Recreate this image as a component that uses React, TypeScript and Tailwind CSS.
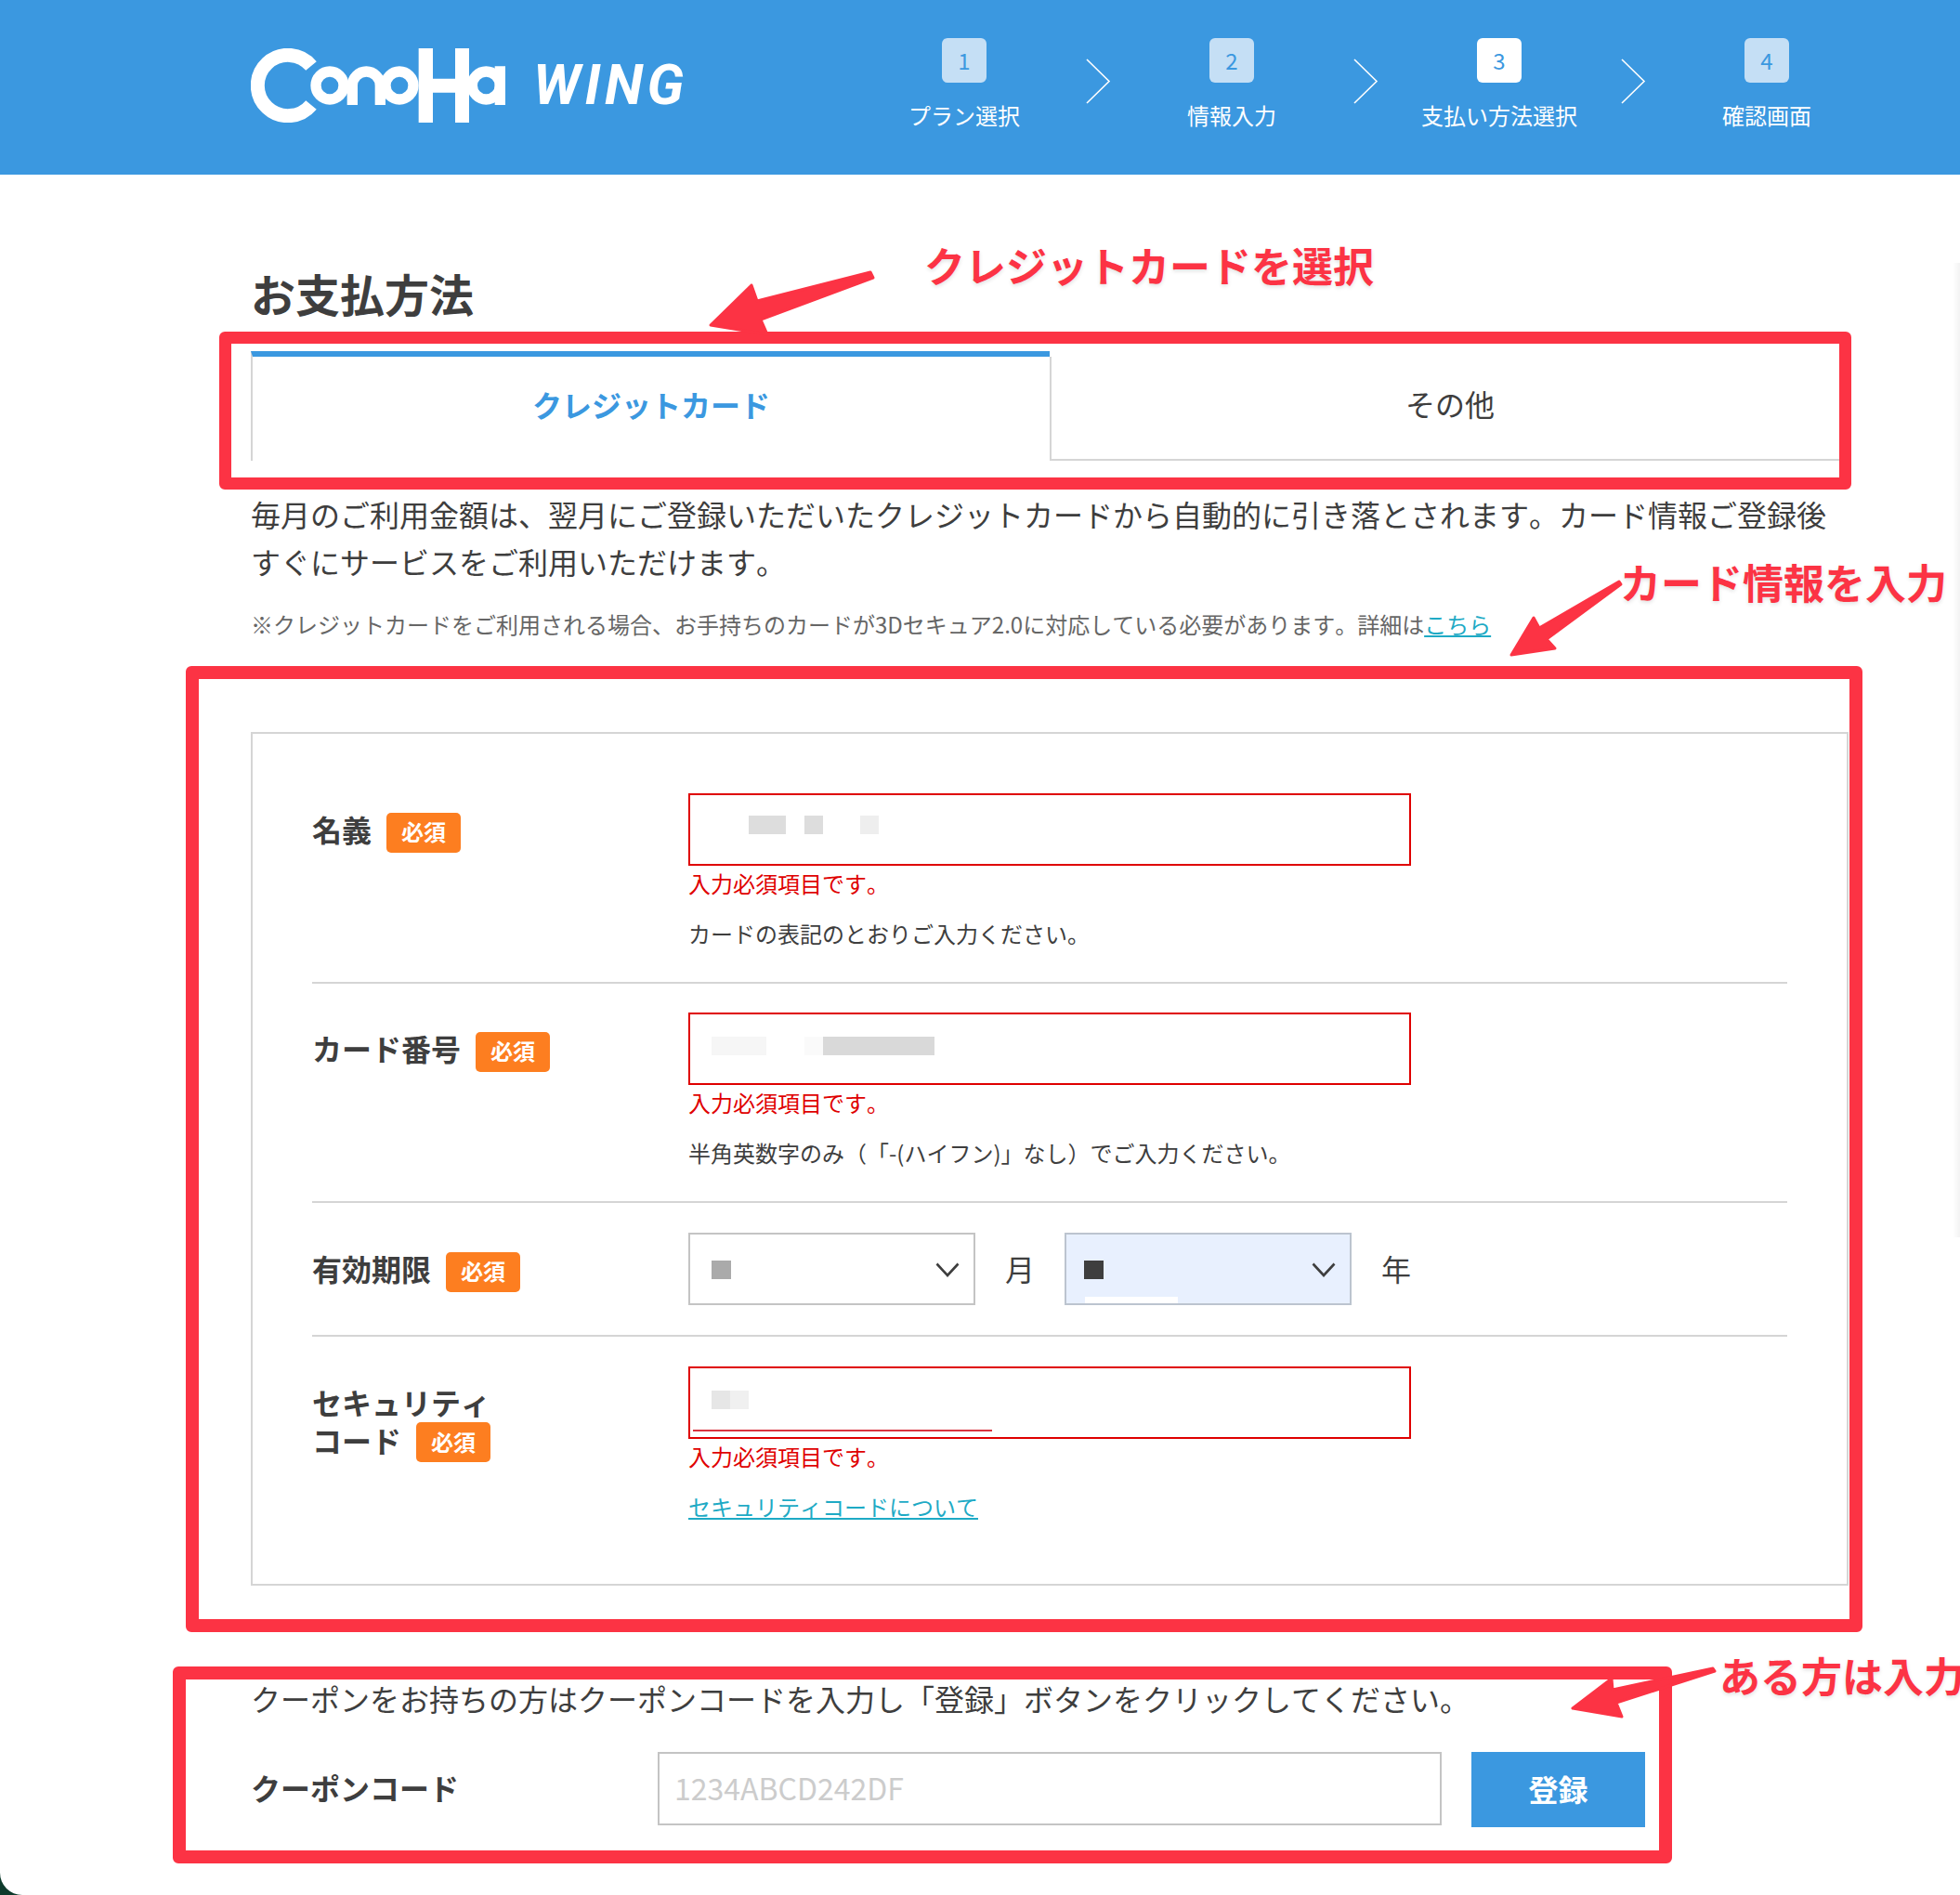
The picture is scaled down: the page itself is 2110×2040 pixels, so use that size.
const STEPS = [
  { n: 1, label: 'プラン選択' },
  { n: 2, label: '情報入力' },
  { n: 3, label: '支払い方法選択', active: true },
  { n: 4, label: '確認画面' },
]

function Logo() {
  return (
    <svg width="275" height="80" viewBox="90 95 825 240" fill="none" role="img" aria-label="ConoHa">
      <g stroke="#fff" strokeWidth="34">
        <path d="M285 152A98 98 0 1 0 285 278" strokeWidth="45" />
        <circle cx="345" cy="215" r="45" />
        <path d="M418 278V215A45 45 0 0 1 508 215V278" />
        <circle cx="570" cy="215" r="45" />
        <circle cx="850" cy="215" r="45" />
      </g>
      <path d="M632 95h46v98h72V95h45v240h-45V238h-72v97h-46zM878 153h34v125h-34z" fill="#fff" />
    </svg>
  )
}

function StepArrow() {
  return (
    <svg width="48" height="49" viewBox="0 0 48 49" fill="none" className="mt-[22px]">
      <path d="M12 1l24 23.500-24 23.500" stroke="#fff" strokeWidth="1.600" />
    </svg>
  )
}

function Required() {
  return (
    <span className="flex h-[43px] w-[80px] shrink-0 items-center justify-center rounded-[5px] bg-[#fd7e20] pb-[2px] text-[24px] leading-none text-white">
      必須
    </span>
  )
}

function Label({ text }: { text: string }) {
  return (
    <div className="flex w-[405px] shrink-0 items-start gap-4 pt-[18px] text-[32px] leading-[41.600px] font-bold">
      <span>{text}</span>
      <span className="mt-[3px]">
        <Required />
      </span>
    </div>
  )
}

function ErrorField({ children, note }: { children: React.ReactNode; note: React.ReactNode }) {
  return (
    <div className="w-[778px]">
      <div className="relative flex h-[78px] items-start border-2 border-[#df0000] bg-white">{children}</div>
      <p className="text-[24px] leading-[38px] text-[#df0000]">入力必須項目です。</p>
      <div className="mt-4 text-[24px] leading-[38px]">{note}</div>
    </div>
  )
}

function SelectBox({ filled, children }: { filled?: boolean; children: React.ReactNode }) {
  return (
    <div
      className={
        filled
          ? 'relative flex h-[78px] w-[309px] items-start border-2 border-[#bcc4cf] bg-[#e8f0fe]'
          : 'relative flex h-[78px] w-[309px] items-start border-2 border-[#c4c4c4] bg-white'
      }
    >
      {children}
      <svg width="26" height="16" viewBox="0 0 26 16" fill="none" className="absolute top-[30px] right-[15px]">
        <path d="M1.500 1.500L13 14L24.500 1.500" stroke="#3e3e3e" strokeWidth="2.600" />
      </svg>
    </div>
  )
}

function Annotations() {
  return (
    <>
      {/* red callout frames drawn over the screenshot */}
      <div className="pointer-events-none absolute top-[357px] left-[236px] h-[170px] w-[1757px] rounded-[6px] border-[13.500px] border-[#fc3344]" />
      <div className="pointer-events-none absolute top-[717px] left-[200px] h-[1040px] w-[1805px] rounded-[6px] border-[14px] border-[#fc3344]" />
      <div className="pointer-events-none absolute top-[1794px] left-[186px] h-[212px] w-[1614px] rounded-[6px] border-[14px] border-[#fc3344]" />

      <svg width="2110" height="2040" viewBox="0 0 2110 2040" className="pointer-events-none absolute top-0 left-0">
        <g fill="#fc3344" stroke="#fc3344" strokeWidth="3" strokeLinejoin="round">
          <polygon points="937,293 815,324 809,307 765,350 826,360 819,344 940,299" />
          <polygon points="1743,626 1657,676 1651,665 1627,705 1674,698 1665,688 1745,629" />
          <polygon points="1844,1796 1736,1819 1735,1807 1693,1839 1746,1848 1740,1833 1846,1799" />
        </g>
      </svg>

      <span className="absolute top-[253px] left-[995px] text-[44px] leading-[64px] font-bold whitespace-nowrap text-[#fc3344] [text-shadow:0_2px_4px_rgba(0,0,0,0.12)]">
        クレジットカードを選択
      </span>
      <span className="absolute top-[594px] left-[1744px] text-[44px] leading-[64px] font-bold whitespace-nowrap text-[#fc3344] [text-shadow:0_2px_4px_rgba(0,0,0,0.12)]">
        カード情報を入力
      </span>
      <span className="absolute top-[1771px] left-[1851px] text-[44px] leading-[64px] font-bold whitespace-nowrap text-[#fc3344] [text-shadow:0_2px_4px_rgba(0,0,0,0.12)]">
        ある方は入力
      </span>

      {/* faint scrollbar at the window edge */}
      <div className="absolute top-[283px] right-0 h-[1049px] w-2 bg-gradient-to-r from-white to-[#f3f3f3]" />
    </>
  )
}

export default function App() {
  return (
    <div className="relative h-[2040px] w-[2110px] overflow-hidden bg-[#0e3b2c] font-['Noto_Sans_CJK_JP','Noto_Sans',sans-serif] text-[#3e3e3e] [font-kerning:none] [text-spacing-trim:space-all]">
      <div className="h-full rounded-bl-[24px] bg-white">
        <header className="flex h-[188px] bg-[#3b98e0] pl-[270px] pr-[88px]">
          <div className="flex items-center gap-[29px] pb-[4px]">
            <Logo />
            <span className="font-['Roboto',sans-serif] text-[60px] leading-none font-bold tracking-[4.500px] text-white italic">
              WING
            </span>
          </div>

          <nav className="ml-auto flex items-start pt-[41px]">
            {STEPS.map((step, i) => (
              <div key={step.n} className="flex items-start">
                {i > 0 && <StepArrow />}
                <div className="flex w-[240px] flex-col items-center">
                  <span
                    className={
                      step.active
                        ? 'flex h-[48px] w-[48px] items-center justify-center rounded-[6px] bg-white text-[24px] text-[#3b98e0]'
                        : 'flex h-[48px] w-[48px] items-center justify-center rounded-[6px] bg-[#c5dff5] text-[24px] text-[#3b98e0]'
                    }
                  >
                    {step.n}
                  </span>
                  <span className="mt-[17px] text-[24px] leading-[36px] text-white">{step.label}</span>
                </div>
              </div>
            ))}
          </nav>
        </header>

        <main className="w-[1990px] pl-[270px]">
          <h1 className="pt-[91px] text-[48px] leading-[72px] font-bold">お支払方法</h1>

          <div className="mt-[27px] flex h-[118px]">
            <div className="flex w-[860px] items-center justify-center border-t-[6px] border-l-2 border-t-[#3b98e0] border-l-[#d5d5d5] pb-[11px] text-[32px] font-bold text-[#3b98e0]">
              クレジットカード
            </div>
            <div className="mt-[6px] flex w-[860px] items-center justify-center border-b-2 border-l-2 border-[#d5d5d5] pb-[11px] text-[32px]">
              その他
            </div>
          </div>

          <p className="mt-8 text-[32px] leading-[51.200px]">
            毎月のご利用金額は、翌月にご登録いただいたクレジットカードから自動的に引き落とされます。カード情報ご登録後すぐにサービスをご利用いただけます。
          </p>
          <p className="mt-[23px] text-[24px] leading-[38.400px] text-[#666]">
            ※クレジットカードをご利用される場合、お手持ちのカードが3Dセキュア2.0に対応している必要があります。詳細は
            <a className="text-[#1eaac5] underline">こちら</a>
          </p>

          <section className="mt-[96px] border-2 border-[#d5d5d5] px-[64px]">
            <div className="flex border-b-2 border-[#d5d5d5] pt-[64px] pb-[33px]">
              <Label text="名義" />
              <ErrorField note="カードの表記のとおりご入力ください。">
                <span className="mt-[22px] ml-[63px] h-5 w-10 bg-[#ddd]" />
                <span className="mt-[22px] ml-5 h-5 w-5 bg-[#ddd]" />
                <span className="mt-[22px] ml-10 h-5 w-5 bg-[#eee]" />
              </ErrorField>
            </div>

            <div className="flex border-b-2 border-[#d5d5d5] pt-[31px] pb-[33px]">
              <Label text="カード番号" />
              <ErrorField note="半角英数字のみ（「-(ハイフン)」なし）でご入力ください。">
                <span className="mt-[24px] ml-[23px] h-5 w-[59px] bg-[#f6f6f6]" />
                <span className="mt-[24px] ml-[41px] h-5 w-5 bg-[#fafafa]" />
                <span className="mt-[24px] h-5 w-[120px] bg-[#d9d9d9]" />
              </ErrorField>
            </div>

            <div className="flex border-b-2 border-[#d5d5d5] pt-[32px] pb-[32px]">
              <Label text="有効期限" />
              <div className="flex items-center">
                <SelectBox>
                  <span className="mt-[28px] ml-[23px] h-5 w-[21px] bg-[#aaa]" />
                </SelectBox>
                <span className="w-[96px] pb-[2px] text-center text-[32px]">月</span>
                <SelectBox filled>
                  <span className="mt-[28px] ml-[19px] h-5 w-[21px] bg-[#3e3e3e]" />
                  <span className="absolute bottom-0 left-[20px] h-[7px] w-[100px] bg-white" />
                </SelectBox>
                <span className="w-[96px] pb-[2px] text-center text-[32px]">年</span>
              </div>
            </div>

            <div className="flex pt-[32px] pb-[64px]">
              <div className="w-[405px] shrink-0 pt-[18px] text-[32px] leading-[41.600px] font-bold">
                <div>セキュリティ</div>
                <div className="flex items-start gap-4">
                  <span>コード</span>
                  <span className="mt-[1px]">
                    <Required />
                  </span>
                </div>
              </div>
              <ErrorField note={<a className="text-[#1eaac5] underline">セキュリティコードについて</a>}>
                <span className="mt-[24px] ml-[23px] h-5 w-5 bg-[#e6e6e6]" />
                <span className="mt-[24px] h-5 w-5 bg-[#f0f0f0]" />
                <span className="absolute bottom-[6px] left-[3px] h-[2px] w-[322px] bg-[#d9333f]" />
              </ErrorField>
            </div>
          </section>

          <p className="mt-[96px] text-[32px] leading-[51px]">
            クーポンをお持ちの方はクーポンコードを入力し「登録」ボタンをクリックしてください。
          </p>
          <div className="mt-[32px] flex items-start">
            <span className="w-[438px] shrink-0 pt-[13px] text-[32px] leading-[50px] font-bold">クーポンコード</span>
            <input
              readOnly
              placeholder="1234ABCD242DF"
              className="h-[79px] w-[844px] border-2 border-[#c4c4c4] bg-white px-[16px] pb-[2px] text-[32px] placeholder:text-[#ccc]"
            />
            <button className="ml-[32px] h-[81px] w-[187px] bg-[#3b98e0] pb-[2px] text-[32px] font-bold text-white">登録</button>
          </div>
        </main>
      </div>

      <Annotations />
    </div>
  )
}
